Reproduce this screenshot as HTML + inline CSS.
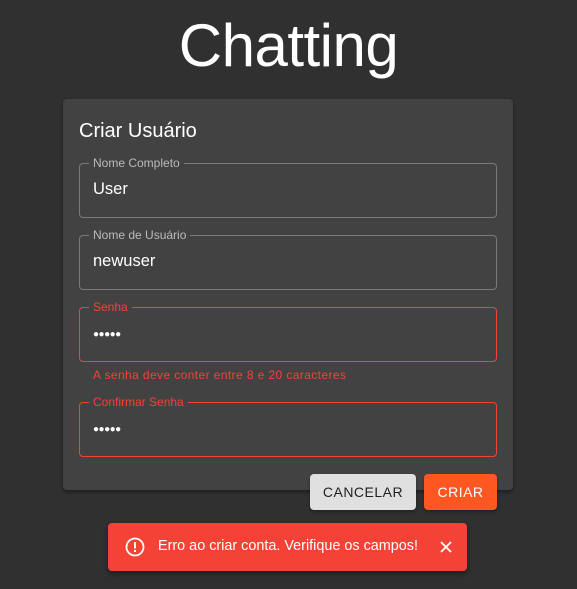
<!DOCTYPE html>
<html><head><style>
*{box-sizing:border-box;margin:0;padding:0}
body{width:577px;height:589px;background:#303030;font-family:"Liberation Sans",sans-serif;position:relative;overflow:hidden;color:#fff}
h1{position:absolute;top:11px;left:0;width:577px;text-align:center;font-weight:400;font-size:60px;letter-spacing:-0.5px}
.card{position:absolute;left:63px;top:99px;width:450px;height:391px;background:#424242;border-radius:4px;box-shadow:0 2px 3px rgba(0,0,0,.4)}
.ct{position:absolute;left:79px;top:120px;font-size:20px}
.f{position:absolute;left:79px;width:418px;height:55px;border:1px solid #7a7a7a;border-radius:4px}
.f.e{border-color:#f44336}
.f label{position:absolute;top:-8px;left:9px;padding:0 4px;background:#424242;font-size:12px;color:#bbb;line-height:14px}
.f.e label{color:#f44336}
.f span{position:absolute;left:13px;top:16px;font-size:16.5px}
.f span.d{font-size:10px;top:21px;letter-spacing:-0.5px}
.helper{position:absolute;left:93px;top:368px;font-size:12px;color:#f44336;letter-spacing:0.4px}
.btn{position:absolute;top:474px;height:36px;border-radius:4px;font-size:14px;display:flex;align-items:center;justify-content:center;letter-spacing:.5px;box-shadow:0 2px 3px rgba(0,0,0,.3)}
.snack{position:absolute;left:108px;top:523px;width:359px;height:48px;background:#f44336;border-radius:4px;box-shadow:0 3px 6px rgba(0,0,0,.4);font-size:14.4px}
</style></head><body>
<h1>Chatting</h1>
<div class="card"></div>
<div class="ct">Criar Usuário</div>
<div class="f" style="top:163px"><label>Nome Completo</label><span>User</span></div>
<div class="f" style="top:235px"><label>Nome de Usuário</label><span>newuser</span></div>
<div class="f e" style="top:307px"><label>Senha</label><span class="d">●●●●●</span></div>
<div class="helper">A senha deve conter entre 8 e 20 caracteres</div>
<div class="f e" style="top:402px"><label>Confirmar Senha</label><span class="d">●●●●●</span></div>
<div class="btn" style="left:310px;width:106px;background:#e0e0e0;color:#222">CANCELAR</div>
<div class="btn" style="left:424px;width:73px;background:#ff5722;color:#fff">CRIAR</div>
<div class="snack">
<svg style="position:absolute;left:17px;top:14px" width="20" height="20" viewBox="0 0 20 20"><circle cx="10" cy="10" r="8.5" fill="none" stroke="#fff" stroke-width="1.8"/><rect x="9" y="5" width="2" height="6.5" fill="#fff"/><rect x="9" y="13" width="2" height="2" fill="#fff"/></svg>
<span style="position:absolute;left:50px;top:15px">Erro ao criar conta. Verifique os campos!</span>
<svg style="position:absolute;left:332px;top:18px" width="12" height="12" viewBox="0 0 12 12"><path d="M1 1L11 11M11 1L1 11" stroke="#fff" stroke-width="1.8"/></svg>
</div>
</body></html>
